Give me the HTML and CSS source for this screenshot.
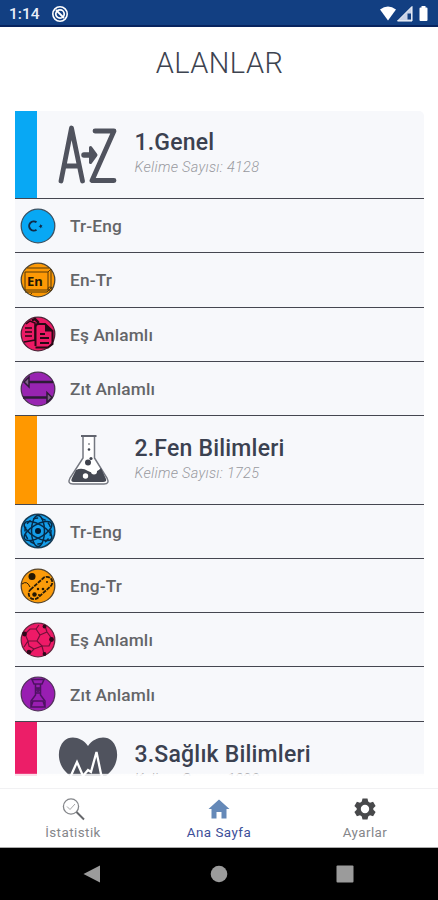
FILE: index.html
```html
<!DOCTYPE html>
<html lang="tr">
<head>
<meta charset="utf-8">
<title>Alanlar</title>
<link rel="stylesheet" href="styles.css">
</head>
<body>
<div class="app">
  <header class="status">
    <span class="clock">1:14</span>
    <svg class="dnd" viewBox="0 0 18 18"><circle cx="9" cy="9" r="7.2" fill="none" stroke="#fff" stroke-width="1.6"/><circle cx="9" cy="9" r="4.2" fill="none" stroke="#fff" stroke-width="1.7"/><path d="M5 5l8 8" stroke="#fff" stroke-width="1.8"/></svg>
    <svg class="signals" viewBox="0 0 52 18"><path d="M1 4.500Q9-1.500 17 4.500L9 15.500Z" fill="#fff"/><path d="M33 1.500V16H18.500Z" fill="#c9d3e8"/><path d="M28.500 8.500h3.500v6h-3.500z" fill="#123f82"/><path d="M33 1.500V16H18.500Z" fill="none" stroke="#fff"/><path d="M40.500 3.500q0-1 1-1h1V1h4v1.500h1q1 0 1 1V15q0 1-1 1h-6q-1 0-1-1z" fill="#fff"/></svg>
  </header>
  <h1 class="title">ALANLAR</h1>
  <main class="list">
    <section class="group">
      <div class="head blue">
        <svg class="pic" viewBox="0 0 60 60" fill="none" stroke="#50535e" stroke-width="4.800" stroke-linecap="round" stroke-linejoin="round"><path d="M3 56L13.500 3L24.500 56M7 41H20M37 6H56L34 55.500H56"/><path d="M26 30h7" stroke-width="5.500"/><path d="M32.500 22.500L38 30L32.500 37.500Z" fill="#50535e" stroke-width="3"/></svg>
        <div class="words"><h2>1.Genel</h2><p>Kelime Sayısı: 4128</p></div>
      </div>
      <div class="row"><svg class="ico" viewBox="0 0 36 36"><circle cx="18" cy="18" r="16.800" fill="#08a8f4" stroke="#3d5262" stroke-width="1.300"/><path d="M16.500 14.300A4.600 4.600 0 1 0 16.500 21.700" fill="none" stroke="#102c49" stroke-width="2"/><path d="M20 16l1 1.200 1.500-.2-.8 1.200.8 1.200-1.500-.2-1 1.200-.1-1.500-1.400-.7 1.400-.5z" fill="#102c49"/></svg><span>Tr-Eng</span></div>
      <div class="row"><svg class="ico" viewBox="0 0 36 36"><circle cx="18" cy="18" r="16.800" fill="#fd9905" stroke="#4b4538" stroke-width="1.300"/><g fill="none" stroke="#54380b" stroke-width="1"><path d="M7 6H29M5 10H28V28H5V10M28 10L31 7V26M5 30H27L32 25M10 33L12 31"/><circle cx="30" cy="27" r="2"/></g><text x="7" y="24" class="en">En</text></svg><span>En-Tr</span></div>
      <div class="row"><svg class="ico" viewBox="0 0 36 36"><circle cx="18" cy="18" r="16.800" fill="#ec1a65" stroke="#4d2338" stroke-width="1.300"/><g fill="none" stroke="#280915" stroke-width="2"><path d="M6 8L10 5L15 7V24L4 26M5 12H12M5 16H12M5 20H12" stroke-width="1.500"/><path d="M15.500 30V11Q15.500 8 18.500 8H25L32.500 15V28L28 31.500H15.500M20 18H25M20 22H29M20 27H29"/><path d="M12 4.500l3-1.500 3 3v2" stroke-width="2.500"/></g><path d="M25 7.500l8 8h-8z" fill="#280915"/></svg><span>Eş Anlamlı</span></div>
      <div class="row"><svg class="ico" viewBox="0 0 36 36"><circle cx="18" cy="18" r="16.800" fill="#9824b1" stroke="#49344f" stroke-width="1.300"/><path d="M9 11H33M3 26.500H28" stroke="#2e1b37" stroke-width="2.500"/><path d="M4 11L9 6V16ZM32 26.500L27 21.500V31.500Z" fill="#806088" stroke="#2e1b37" stroke-width="1.500"/></svg><span>Zıt Anlamlı</span></div>
    </section>
    <section class="group">
      <div class="head orange">
        <svg class="pic" viewBox="0 0 60 60"><path d="M25 7V28L12 48Q9 54 15 54H46Q52 54 49 48L36.500 28V7" fill="#fff" stroke="#747780" stroke-width="1.500"/><path d="M23 6H38.500" stroke="#50535e" stroke-width="1.800"/><path d="M18 40Q24 37 30 41Q36 45 43 38L48 49Q49 52 45 52H16Q12 52 14 48Z" fill="#444852"/><g fill="#3f434d"><circle cx="30" cy="32.500" r="3"/><circle cx="33" cy="28.500" r="1.600"/><circle cx="31" cy="19.500" r="1.300"/><circle cx="31" cy="14" r=".8"/></g><circle cx="36" cy="41.500" r="3" fill="#fff"/><circle cx="27.500" cy="46" r="2.700" fill="#fff"/></svg>
        <div class="words"><h2>2.Fen Bilimleri</h2><p>Kelime Sayısı: 1725</p></div>
      </div>
      <div class="row"><svg class="ico" viewBox="0 0 36 36"><circle cx="18" cy="18" r="16.800" fill="#149eea" stroke="#183c55" stroke-width="1.500"/><g fill="none" stroke="#062b48" stroke-width="1.500"><ellipse cx="18" cy="18" rx="6.500" ry="15.500"/><ellipse cx="18" cy="18" rx="6.500" ry="15.500" transform="rotate(60 18 18)"/><ellipse cx="18" cy="18" rx="6.500" ry="15.500" transform="rotate(120 18 18)"/><circle cx="18" cy="18" r="13" stroke-dasharray="5 3"/></g><circle cx="18" cy="18" r="3" fill="#03192d"/></svg><span>Tr-Eng</span></div>
      <div class="row"><svg class="ico" viewBox="0 0 36 36"><circle cx="18" cy="18" r="16.800" fill="#fb9b0a" stroke="#57452b" stroke-width="1.300"/><g fill="none" stroke="#281c08" stroke-width="1.800"><rect x="6.500" y="14.500" width="28" height="11" rx="5.500" transform="rotate(-42 20.500 20)" stroke-dasharray="4 1"/><path d="M2 16Q7 12 10 19" stroke-width="1"/></g><g fill="#241804"><circle cx="12" cy="8.500" r="3.500"/><circle cx="14.500" cy="26.500" r="2.200"/><circle cx="18" cy="21" r="1.200"/><circle cx="23" cy="21" r="1.300"/><circle cx="19" cy="27" r="1"/><circle cx="27" cy="14" r="1"/></g></svg><span>Eng-Tr</span></div>
      <div class="row"><svg class="ico" viewBox="0 0 36 36"><circle cx="18" cy="18" r="16.800" fill="#ee1a67" stroke="#632840" stroke-width="1.300"/><path d="M5 12L10 7H16L20 13L17 19H8L5 12M16 7L19 3M20 13L27 10L32 17L29 24H22L17 19M8 19L4 25M10 31L14 27L22 24L24 32M14 27L9 24L8 19M27 10L25 4" fill="none" stroke="#711039" stroke-width="1.200"/><g fill="#30071a"><circle cx="4.500" cy="12" r="2.400"/><circle cx="24.500" cy="4.500" r="1.900"/><circle cx="31.500" cy="17.500" r="2.400"/><circle cx="9" cy="30" r="2.300"/><circle cx="24.500" cy="32" r="1.900"/></g></svg><span>Eş Anlamlı</span></div>
      <div class="row"><svg class="ico" viewBox="0 0 36 36"><circle cx="18" cy="18" r="16.800" fill="#991eb2" stroke="#54315d" stroke-width="1.300"/><g fill="none" stroke="#4d1261" stroke-width="1.500"><path d="M12 3.500H24L22 8H14ZM15.500 8V19L11 25V31H25V25L20.500 19V8M13 25H23L25 31H11ZM15 12H21M15 17H21"/><circle cx="18" cy="14" r="1.200"/></g></svg><span>Zıt Anlamlı</span></div>
    </section>
    <section class="group">
      <div class="head pink">
        <svg class="pic" viewBox="0 0 60 60"><path d="M30 11C36 2 48 0 54 6C61 13 61 27 53 36L30 60L7 36C-1 27-1 13 6 6C12 0 24 2 30 11Z" fill="#50535e"/><path d="M12 43L15 36L19 27L25 41L30 35L33 37L38.500 17L43 39L45 43" fill="none" stroke="#fff" stroke-width="2.300"/></svg>
        <div class="words"><h2>3.Sağlık Bilimleri</h2><p>Kelime Sayısı: 1098</p></div>
      </div>
    </section>
  </main>
  <nav class="tabs">
    <a class="tab"><svg viewBox="0 0 24 24"><circle cx="10" cy="9.500" r="7.600" fill="none" stroke="#85878b" stroke-width="1.300"/><path d="M6 9.500L9 12.500L14 7" fill="none" stroke="#a6a6a8"/><path d="M15.500 15L23 22.500" stroke="#65676b" stroke-width="1.900"/></svg><span>İstatistik</span></a>
    <a class="tab active"><svg viewBox="0 0 24 24"><path d="M12 2.500L22.500 12H19.500V21.500H14.500V15H9.500V21.500H4.500V12H1.500Z" fill="#6589b8"/></svg><span>Ana Sayfa</span></a>
    <a class="tab"><svg viewBox="0 0 24 24"><path fill="#48494b" fill-rule="evenodd" d="M9.500 1.500H14.500L15.200 4.600L17 5.700L20.100 4.800L22.600 9.100L20.300 11.200V12.800L22.600 14.900L20.100 19.200L17 18.300L15.200 19.400L14.500 22.500H9.500L8.800 19.400L7 18.300L3.900 19.200L1.400 14.900L3.700 12.800V11.200L1.400 9.100L3.900 4.800L7 5.700L8.800 4.600ZM12 7.800A4.200 4.200 0 1 0 12 16.200A4.200 4.200 0 1 0 12 7.800Z"/></svg><span>Ayarlar</span></a>
  </nav>
  <footer class="system">
    <svg viewBox="0 0 18 18"><path d="M.5 9L17 .5V17.500Z"/></svg>
    <svg viewBox="0 0 18 18"><circle cx="9" cy="9" r="8.300"/></svg>
    <svg viewBox="0 0 18 18"><rect x=".5" y=".5" width="17" height="17" rx="1"/></svg>
  </footer>
</div>
</body>
</html>
```
FILE: styles.css
```css
* { box-sizing: border-box; }
body { margin: 0; background: #fff; font-family: Roboto, "Liberation Sans", sans-serif; }
h1, h2, p { margin: 0; }
svg { display: block; flex: none; }
.app { width: 438px; height: 900px; display: flex; flex-direction: column; overflow: hidden; }
.status { height: 27px; flex: none; background: #123f82; border-bottom: 2px solid #08245f; display: flex; align-items: center; padding: 3px 7px 0 9px; color: #e9eef8; }
.clock { font-size: 15.5px; font-weight: 500; width: 42px; }
.dnd { width: 18px; height: 18px; }
.signals { width: 52px; height: 18px; margin-left: auto; }
.title { height: 84px; flex: none; padding: 18px 0 0 1px; line-height: 36px; font-size: 29px; font-weight: 350; text-align: center; color: #3d4350; letter-spacing: .45px; }
.list { position: relative; height: 665px; flex: none; margin: 0 14px 0 15px; overflow: hidden; border-radius: 0 5px 0 0; }
/* Content fades out under the lower edge of the scroll area. */
.list::after { content: ""; position: absolute; left: 0; right: 0; bottom: 0; height: 3px; background: linear-gradient(rgba(255,255,255,.15) 0 1px, rgba(255,255,255,.85) 1px); }
.group { background: #f7f8fb; }
.head { height: 88px; display: flex; align-items: center; border-bottom: 1px solid #454650; }
.group + .group .head { height: 88.4px; }
.head::before { content: ""; width: 22px; height: 100%; flex: none; }
.blue::before { background: #08a8f4; }
.orange::before { background: #ff9800; }
.pink::before { background: #ec1e68; }
.pic { width: 60px; height: 60px; margin: 0 16.5px 0 21px; }
.words { padding-bottom: 1px; }
.group + .group .words { padding: 1px 0 0; }
.words h2 { font-size: 23px; line-height: 27px; font-weight: 500; color: #3b4150; white-space: nowrap; letter-spacing: .2px; }
.words p { font-size: 14.5px; line-height: 22px; font-style: italic; font-weight: 350; color: #999a9f; letter-spacing: .3px; margin-top: 1px; }
.row { height: 54.3px; display: flex; align-items: center; border-bottom: 1px solid #454650; padding-left: 5px; }
.ico { width: 36px; height: 36px; }
.en { font: 700 13px "Noto Sans", sans-serif; fill: #211603; }
.row span { margin-left: 14px; font-size: 17.3px; font-weight: 500; color: #646568; letter-spacing: .15px; padding-top: 1px; }
.tabs { height: 60px; flex: none; margin-top: 12px; border-top: 1px solid #f1f1f3; border-bottom: 1px solid #aaa; display: grid; grid-template-columns: repeat(3, 146px); }
.tab { display: flex; flex-direction: column; align-items: center; padding-top: 8px; color: #85868a; font-size: 13.4px; line-height: 18px; letter-spacing: .45px; }
.tab svg { width: 24px; height: 24px; margin-bottom: 3px; }
.tab.active { color: #3d4f99; }
.system { height: 52px; flex: none; background: #000; display: flex; justify-content: space-between; padding: 17px 84px 0 83px; }
.system svg { width: 18px; height: 18px; fill: #9b9b9b; }
```
